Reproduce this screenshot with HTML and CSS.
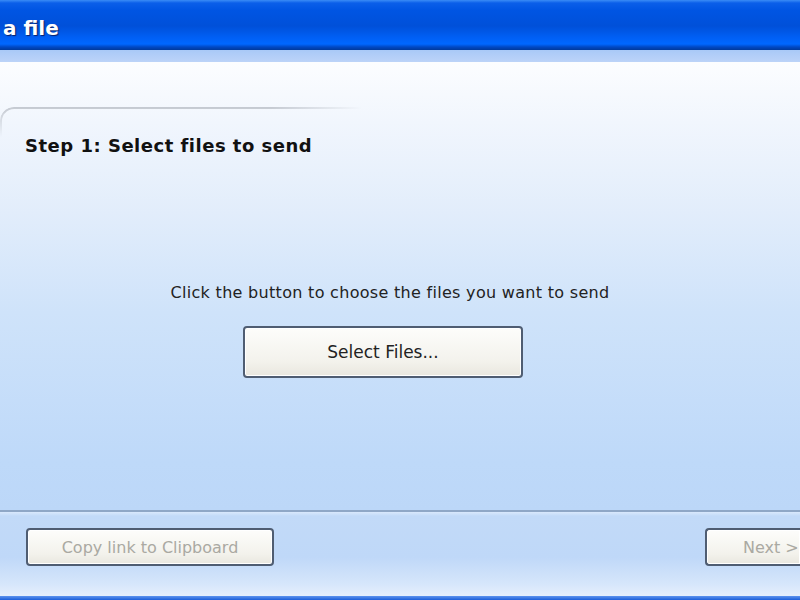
FILE: index.html
```html
<!DOCTYPE html>
<html lang="en">
<head>
    <meta charset="UTF-8">
    <title>Send a file</title>
    <link rel="stylesheet" href="styles.css">
</head>
<body>
    <div class="window">
        <div class="titlebar">
            <span class="title">a file</span>
        </div>
        <div class="strip"></div>
        <div class="content">
            <div class="panel">
                <h1 class="step">Step 1: Select files to send</h1>
                <div class="chooser">
                    <p class="hint">Click the button to choose the files you want to send</p>
                    <button class="btn btn-select">Select Files...</button>
                </div>
            </div>
        </div>
        <div class="footer">
            <button class="btn btn-copy" disabled>Copy link to Clipboard</button>
            <button class="btn btn-next" disabled>Next &gt;</button>
        </div>
        <div class="bottom-edge"></div>
    </div>
</body>
</html>
```

FILE: styles.css
```css
:root {
    --btn-border: #4f5d72;
    --btn-face: linear-gradient(#fdfdfb, #f3f2ec 70%, #e9e7df);
    --disabled-text: #aaa9a2;
}

* {
    box-sizing: border-box;
}

body {
    margin: 0;
    overflow: hidden;
    font-family: 'DejaVu Sans', 'Liberation Sans', sans-serif;
}

.window {
    width: 800px;
    height: 600px;
    display: flex;
    flex-direction: column;
    overflow: hidden;
}

.titlebar {
    height: 50px;
    flex-shrink: 0;
    display: flex;
    align-items: center;
    padding-left: 3px;
    background: linear-gradient(#3a8cf6 0, #0b5fe9 3px, #0055e3 10px, #0050d9 26px, #0060f6 38px, #0068ff 44px, #0048c4 47px, #003a9c 50px);
}

.title {
    color: #fff;
    font-size: 20px;
    font-weight: bold;
    padding-top: 5px;
    text-shadow: 1px 1px 1px #0a1f66;
}

.strip {
    height: 12px;
    flex-shrink: 0;
    background: linear-gradient(#a9c9f7, #bcd3f8);
}

.content {
    flex: 1;
    padding-top: 45px;
    background: linear-gradient(#fcfdff 0, #f1f6fd 60px, #e2edfb 150px, #cfe3fa 250px, #bed9f9 400px, #bcd7f8 448px);
}

.panel {
    position: relative;
    padding: 28px 0 0 25px;
}

/* rounded tab edge that fades out to the right */
.panel::before {
    content: '';
    position: absolute;
    left: 0;
    top: 0;
    width: 360px;
    height: 28px;
    border-top: 2px solid #c4c9d1;
    border-left: 2px solid #c4c9d1;
    border-top-left-radius: 14px;
    -webkit-mask-image: linear-gradient(to right, #000 75%, transparent), linear-gradient(#000, transparent);
    -webkit-mask-composite: source-in;
    mask-image: linear-gradient(to right, #000 75%, transparent), linear-gradient(#000, transparent);
    mask-composite: intersect;
}

.step {
    margin: 0;
    font-size: 18px;
    font-weight: bold;
    color: #111;
    letter-spacing: 0.5px;
}

.chooser {
    display: flex;
    flex-direction: column;
    align-items: center;
    padding-top: 127px;
    padding-right: 45px;
}

.hint {
    margin: 0 0 24px;
    font-size: 16px;
    letter-spacing: 0.3px;
    color: #222;
}

.btn {
    font-family: 'DejaVu Sans', 'Liberation Sans', sans-serif;
    border: 2px solid var(--btn-border);
    border-radius: 4px;
    background: var(--btn-face);
    box-shadow: inset 0 0 0 1px #fff;
    padding: 0;
}

.btn-select {
    width: 280px;
    height: 52px;
    font-size: 17px;
    color: #222;
    margin-right: 14px;
}

.footer {
    flex-shrink: 0;
    height: 86px;
    display: flex;
    justify-content: space-between;
    align-items: flex-start;
    padding: 16px 0 0 26px;
    border-top: 2px solid #8fa7c6;
    background: linear-gradient(#d9e8fc 0, #c2daf8 4px, #bfd8f8 45px, #d6e6fb 72px, #e6effc 84px);
}

.btn-copy,
.btn-next {
    height: 38px;
    font-size: 16px;
    color: var(--disabled-text);
}

.btn-copy {
    width: 248px;
}

.btn-next {
    width: 95px;
    text-align: left;
    padding-left: 36px;
    border-right: none;
    border-top-right-radius: 0;
    border-bottom-right-radius: 0;
}

.bottom-edge {
    flex-shrink: 0;
    height: 4px;
    background: linear-gradient(#5d93ee, #1d5fd9);
}
```
